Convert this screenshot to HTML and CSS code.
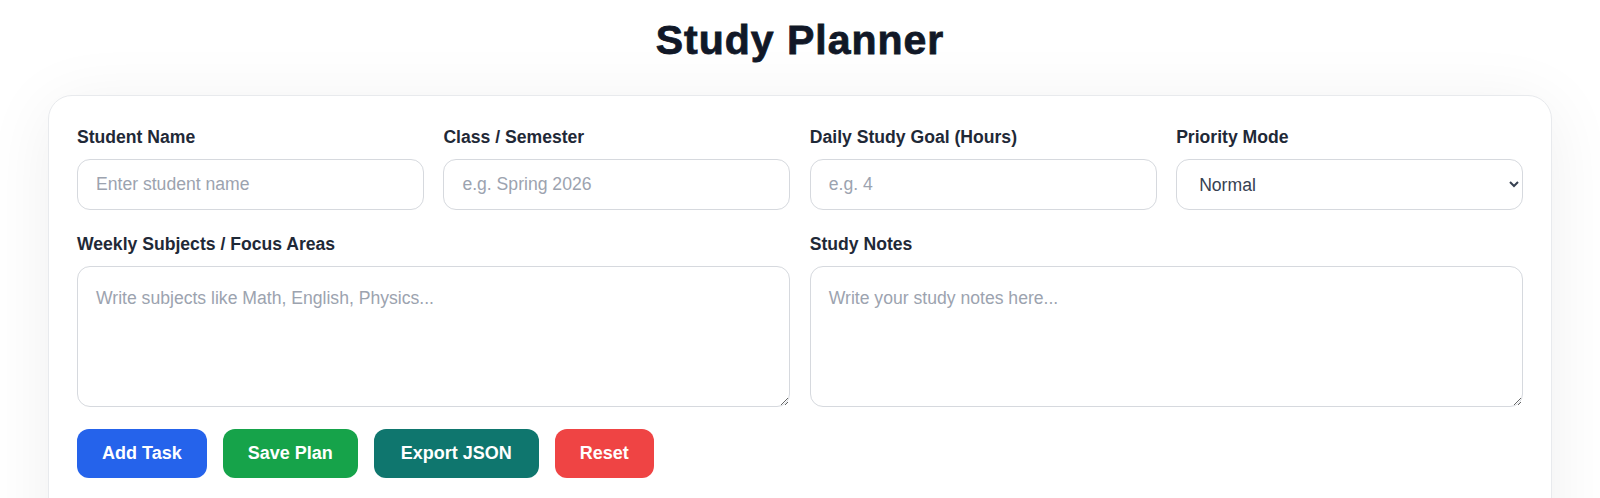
FILE: index.html
```html
<!DOCTYPE html>
<html lang="en">
<head>
<meta charset="utf-8">
<title>Study Planner</title>
<link rel="stylesheet" href="styles.css">
</head>
<body>
  <h1 class="title">Study Planner</h1>
  <main class="card">
    <div class="form-grid">
      <div class="field">
        <label class="label" for="name">Student Name</label>
        <input class="control" id="name" type="text" placeholder="Enter student name">
      </div>
      <div class="field">
        <label class="label" for="class">Class / Semester</label>
        <input class="control" id="class" type="text" placeholder="e.g. Spring 2026">
      </div>
      <div class="field">
        <label class="label" for="goal">Daily Study Goal (Hours)</label>
        <input class="control" id="goal" type="text" placeholder="e.g. 4">
      </div>
      <div class="field">
        <label class="label" for="priority">Priority Mode</label>
        <select class="control select" id="priority">
          <option>Normal</option>
          <option>High</option>
          <option>Low</option>
        </select>
      </div>
      <div class="field span-2">
        <label class="label" for="subjects">Weekly Subjects / Focus Areas</label>
        <textarea class="control area" id="subjects" placeholder="Write subjects like Math, English, Physics..."></textarea>
      </div>
      <div class="field span-2">
        <label class="label" for="notes">Study Notes</label>
        <textarea class="control area" id="notes" placeholder="Write your study notes here..."></textarea>
      </div>
    </div>
    <div class="actions">
      <button class="btn btn-blue" type="button">Add Task</button>
      <button class="btn btn-green" type="button">Save Plan</button>
      <button class="btn btn-teal" type="button">Export JSON</button>
      <button class="btn btn-red" type="button">Reset</button>
    </div>
    <div class="spacer"></div>
  </main>
</body>
</html>
```

FILE: styles.css
```css
* {
  box-sizing: border-box;
}

html, body {
  margin: 0;
  padding: 0;
}

body {
  background: #ffffff;
  font-family: "Liberation Sans", Arial, sans-serif;
  color: #1f2937;
}

.title {
  margin: 17px 0 31px;
  text-align: center;
  font-size: 41px;
  line-height: 47px;
  font-weight: 800;
  letter-spacing: 1px;
  color: #111827;
  -webkit-text-stroke: 0.8px #111827;
}

.card {
  margin: 0 48px;
  background: #ffffff;
  border: 1px solid #e8eaed;
  border-radius: 24px;
  padding: 31px 28px 40px;
  box-shadow: 0 10px 70px rgba(0, 0, 0, 0.065);
}

.form-grid {
  display: grid;
  grid-template-columns: repeat(4, 1fr);
  column-gap: 19.5px;
  row-gap: 24px;
}

.field {
  display: flex;
  flex-direction: column;
  min-width: 0;
}

.span-2 {
  grid-column: span 2;
}

.label {
  font-size: 17.6px;
  line-height: 20px;
  font-weight: 700;
  color: #1f2937;
  margin-bottom: 12px;
}

.control {
  width: 100%;
  height: 51px;
  padding: 14px 18px;
  border: 1px solid #d6d9de;
  border-radius: 13px;
  background: #ffffff;
  font-family: "Liberation Sans", Arial, sans-serif;
  font-size: 17.6px;
  line-height: 21px;
  color: #374151;
  outline: none;
}

.control::placeholder {
  color: #9ca3af;
}

.select {
  padding: 14px 20px 14px 18px;
  color: #374151;
}

.area {
  height: 141px;
  padding: 18px 18px;
  line-height: 1.5;
  resize: vertical;
}

.actions {
  display: flex;
  gap: 16px;
  margin-top: 22px;
}

.btn {
  height: 49px;
  padding: 0 25px;
  border: none;
  border-radius: 12px;
  font-family: "Liberation Sans", Arial, sans-serif;
  font-size: 18px;
  font-weight: 700;
  color: #ffffff;
  cursor: pointer;
}

.btn-blue {
  background: #2563eb;
}

.btn-green {
  background: #16a34a;
}

.btn-teal {
  background: #0f766e;
  padding: 0 27px;
}

.btn-red {
  background: #ef4444;
}

.spacer {
  height: 200px;
}
```
